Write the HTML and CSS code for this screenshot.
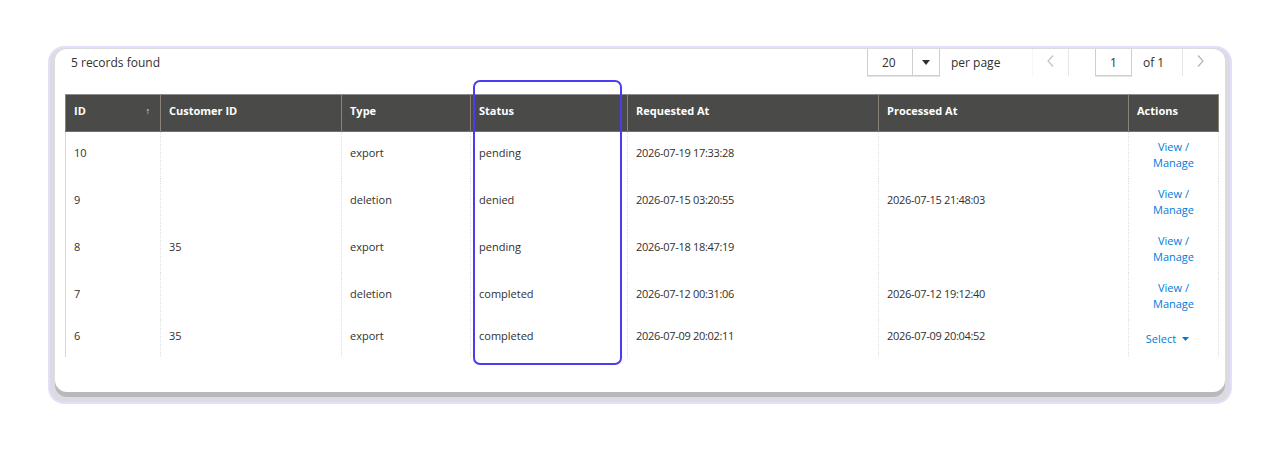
FILE: index.html
```html
<!DOCTYPE html>
<html lang="en">
<head>
<meta charset="utf-8">
<title>Requests grid</title>
<link rel="stylesheet" href="styles.css">
</head>
<body>
<div class="page">
  <div class="frame">
    <div class="card">
      <div class="toolbar">
        <div class="count">5 records found</div>
        <div class="pager">
          <div class="pp-select">
            <span class="pp-value">20</span>
            <span class="pp-btn"><svg width="8" height="5" viewBox="0 0 8 5"><path d="M0 0h8L4 5z" fill="#303030"/></svg></span>
          </div>
          <span class="pp-label">per page</span>
          <span class="pg-prev"><svg width="7" height="12" viewBox="0 0 7 12"><path d="M6 0.5L1 6l5 5.5" fill="none" stroke="#c2c2c2" stroke-width="1.2"/></svg></span>
          <span class="pg-input">1</span>
          <span class="pg-total">of 1</span>
          <span class="pg-next"><svg width="7" height="12" viewBox="0 0 7 12"><path d="M1 0.5L6 6l-5 5.5" fill="none" stroke="#b4b4b4" stroke-width="1.2"/></svg></span>
        </div>
      </div>
      <table class="grid">
        <colgroup>
          <col class="c-id"><col class="c-cust"><col class="c-type"><col class="c-status"><col class="c-req"><col class="c-proc"><col class="c-act">
        </colgroup>
        <thead>
          <tr>
            <th><div class="th-sort"><span>ID</span><span class="arrow">&#8593;</span></div></th>
            <th>Customer ID</th>
            <th>Type</th>
            <th>Status</th>
            <th>Requested At</th>
            <th>Processed At</th>
            <th>Actions</th>
          </tr>
        </thead>
        <tbody>
          <tr class="row">
            <td>10</td><td></td><td>export</td><td>pending</td><td class="dt">2026-07-19 17:33:28</td><td></td>
            <td class="act"><a href="#">View /<br>Manage</a></td>
          </tr>
          <tr class="row">
            <td>9</td><td></td><td>deletion</td><td>denied</td><td class="dt">2026-07-15 03:20:55</td><td class="dt">2026-07-15 21:48:03</td>
            <td class="act"><a href="#">View /<br>Manage</a></td>
          </tr>
          <tr class="row">
            <td>8</td><td>35</td><td>export</td><td>pending</td><td class="dt">2026-07-18 18:47:19</td><td></td>
            <td class="act"><a href="#">View /<br>Manage</a></td>
          </tr>
          <tr class="row">
            <td>7</td><td></td><td>deletion</td><td>completed</td><td class="dt">2026-07-12 00:31:06</td><td class="dt">2026-07-12 19:12:40</td>
            <td class="act"><a href="#">View /<br>Manage</a></td>
          </tr>
          <tr class="row last">
            <td>6</td><td>35</td><td>export</td><td>completed</td><td class="dt">2026-07-09 20:02:11</td><td class="dt">2026-07-09 20:04:52</td>
            <td class="act"><a href="#" class="select">Select <svg width="7" height="4" viewBox="0 0 7 4"><path d="M0 0h7L3.5 4z" fill="#007bdb"/></svg></a></td>
          </tr>
        </tbody>
      </table>
    </div>
  </div>
  <div class="highlight"></div>
</div>
</body>
</html>
```

FILE: styles.css
```css
html, body {
  margin: 0;
  padding: 0;
  background: #ffffff;
}

body {
  font-family: "Open Sans", "Liberation Sans", sans-serif;
  color: #303030;
}

.page {
  position: relative;
  width: 1280px;
  height: 452px;
  padding: 46px 48px 0 48px;
  box-sizing: border-box;
}

.frame {
  width: 1184px;
  height: 358px;
  box-sizing: border-box;
  border: 2px solid #e2e0fc;
  border-radius: 16px;
  background: #dcdce0;
  padding: 1px 5px 10px 5px;
}

.card {
  height: 343px;
  box-sizing: border-box;
  background: #ffffff;
  border-radius: 12px;
  box-shadow: 0 5px 0 #b9b9bd;
  padding: 0 7px 0 10px;
}

.toolbar {
  display: flex;
  align-items: flex-start;
  height: 27px;
}

.count {
  font-size: 12px;
  line-height: 16px;
  padding: 6px 0 0 6px;
}

.pager {
  margin-left: auto;
  display: flex;
  align-items: stretch;
  height: 27px;
  font-size: 12px;
}

.pp-select {
  display: flex;
  border: 1px solid #cfcfcf;
  border-top: none;
  box-shadow: 0 1px 0 #e4e4e4;
  box-sizing: border-box;
  height: 27px;
}

.pp-value {
  width: 45px;
  box-sizing: border-box;
  padding: 1px 0 0 14px;
  line-height: 25px;
  border-right: 1px solid #cfcfcf;
}

.pp-btn {
  width: 26px;
  display: flex;
  align-items: center;
  justify-content: center;
}

.pp-label {
  margin-left: 11px;
  padding-top: 1px;
  line-height: 25px;
  width: 51px;
}

.pg-prev {
  margin-left: 30px;
  width: 37px;
  box-sizing: border-box;
  border-left: 1px dotted #ececec;
  border-right: 1px solid #e6e6e6;
  display: flex;
  align-items: center;
  justify-content: center;
  padding-bottom: 4px;
}

.pg-input {
  margin-left: 26px;
  width: 37px;
  box-sizing: border-box;
  border: 1px solid #cfcfcf;
  border-top: none;
  box-shadow: 0 1px 0 #e4e4e4;
  text-align: center;
  padding-top: 1px;
  line-height: 25px;
}

.pg-total {
  margin-left: 11px;
  padding-top: 1px;
  line-height: 25px;
  width: 39px;
}

.pg-next {
  width: 36px;
  box-sizing: border-box;
  border-left: 1px solid #e6e6e6;
  display: flex;
  align-items: center;
  justify-content: center;
  padding-bottom: 4px;
}

.grid {
  margin-top: 18px;
  width: 1153px;
  table-layout: fixed;
  border-collapse: collapse;
  font-size: 11px;
}

.c-id { width: 95px; }
.c-cust { width: 181px; }
.c-type { width: 129px; }
.c-status { width: 157px; }
.c-req { width: 251px; }
.c-proc { width: 250px; }
.c-act { width: 90px; }

.grid th {
  background: #4a4a49;
  color: #ffffff;
  font-weight: 700;
  text-align: left;
  height: 37px;
  padding: 0 9px 4px 8px;
  box-sizing: border-box;
  border-top: 1px solid #8e8e8e;
  border-bottom: 1px solid #7e6f58;
  border-left: 1px solid #8a837a;
  border-right: 1px solid #8a837a;
  line-height: 16px;
}

.th-sort {
  display: flex;
  justify-content: space-between;
  align-items: center;
}

.arrow {
  font-size: 9px;
  font-weight: 400;
  margin-right: 1px;
  color: #e8e8e8;
}

.grid td {
  height: 47px;
  padding: 0 9px 5px 8px;
  box-sizing: border-box;
  vertical-align: middle;
  line-height: 16px;
  border-left: 1px dotted #dedede;
  border-right: 1px dotted #dedede;
  white-space: nowrap;
}

.grid td.dt {
  letter-spacing: -0.3px;
}

.grid td:first-child {
  border-left: 1px solid #d6d6d6;
}

.grid .row.last td {
  height: 37px;
}

.grid td.act {
  text-align: center;
  padding: 0 4px;
}

.act a {
  color: #007bdb;
  text-decoration: none;
}

.act a.select {
  display: inline-flex;
  align-items: center;
  gap: 6px;
  margin-right: 12px;
  padding-top: 2px;
}

.highlight {
  position: absolute;
  left: 473px;
  top: 80px;
  width: 149px;
  height: 285px;
  box-sizing: border-box;
  border: 2px solid #4a3cf2;
  border-radius: 7px;
}
```
